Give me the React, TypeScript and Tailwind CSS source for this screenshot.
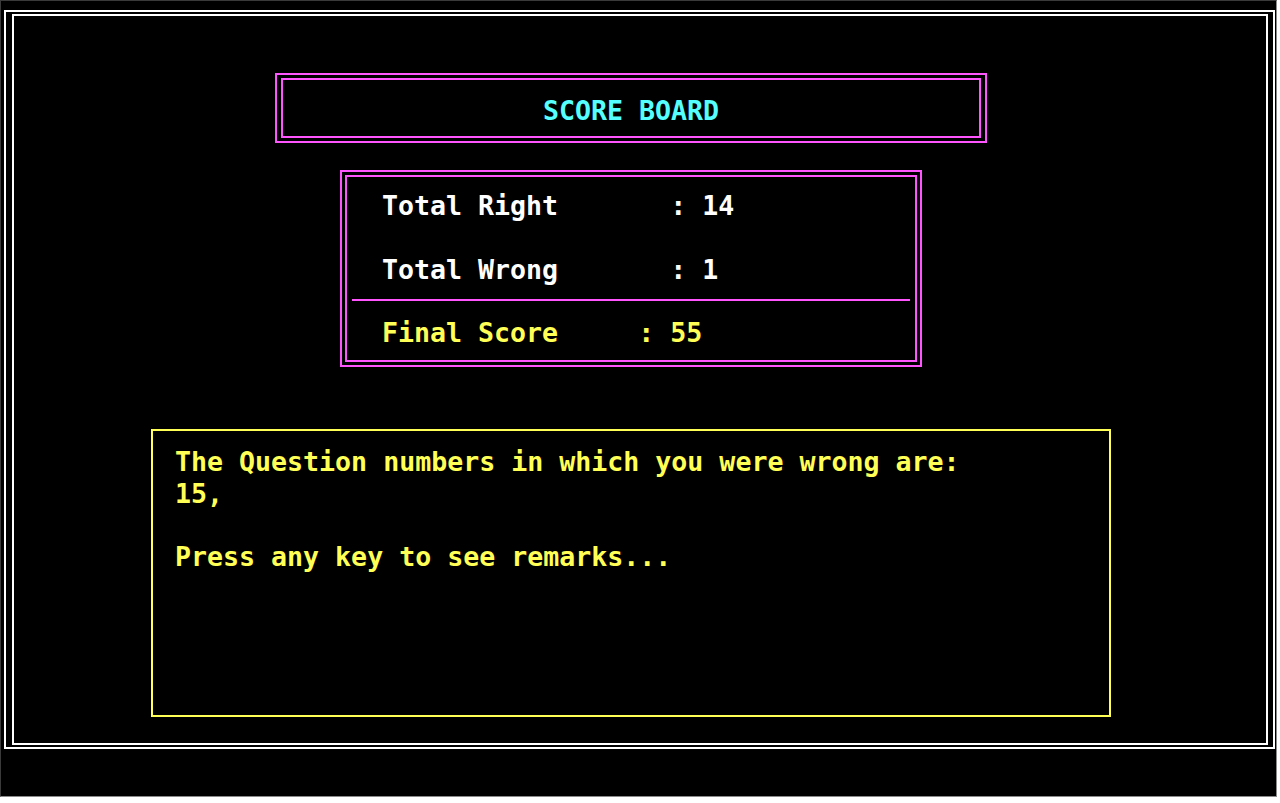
import React from "react";

const mono = "font-['DejaVu_Sans_Mono','Liberation_Mono',monospace] text-[26.6px] font-bold whitespace-pre";

export default function App() {
  return (
    <div className="w-[1280px] h-[803px] bg-white overflow-hidden">
      <div className="w-[1277px] h-[797px] bg-black border-r border-b border-[#8a8a8a] border-t border-l border-t-[#3a3a3a] border-l-[#3a3a3a] box-border pt-[9px] pl-[3px]">
        {/* outer white frame */}
        <div className="w-[1271px] h-[739px] border-2 border-white box-border pl-[6px] pr-[5px] pt-[2px] pb-[2px]">
          {/* inner white frame */}
          <div className="w-full h-full border-2 border-white box-border flex flex-col">
            {/* Title box */}
            <div className="ml-[261px] mt-[57px] w-[712px] h-[70px] border-2 border-[#ff55ff] box-border px-[4px] py-[3px]">
              <div className="w-full h-full border-2 border-[#ff55ff] box-border flex items-center justify-center">
                <span className={`${mono} text-[#55ffff] leading-[32px] pt-[5px]`}>SCORE BOARD</span>
              </div>
            </div>

            {/* Stats box */}
            <div className="ml-[326px] mt-[27px] w-[582px] h-[197px] border-2 border-[#ff55ff] box-border p-[3px]">
              <div className="w-full h-full border-2 border-[#ff55ff] box-border flex flex-col pt-[13px]">
                <div className={`${mono} text-white leading-[32px] pl-[35px]`}>Total Right       : 14</div>
                <div className={`${mono} text-white leading-[32px] pl-[35px] mt-[32px]`}>Total Wrong       : 1</div>
                <div className="mx-[5px] mt-[13px] h-[2px] bg-[#ff55ff]" />
                <div className={`${mono} text-[#ffff55] leading-[32px] pl-[35px] mt-[16px]`}>Final Score     : 55</div>
              </div>
            </div>

            {/* Wrong answers box */}
            <div className="ml-[137px] mt-[62px] w-[960px] h-[288px] border-2 border-[#ffff55] box-border pl-[22px] pt-[15px]">
              <div className={`${mono} text-[#ffff55] leading-[31.5px]`}>The Question numbers in which you were wrong are:</div>
              <div className={`${mono} text-[#ffff55] leading-[31.5px]`}>15,</div>
              <div className={`${mono} text-[#ffff55] leading-[31.5px]`}> </div>
              <div className={`${mono} text-[#ffff55] leading-[31.5px]`}>Press any key to see remarks...</div>
            </div>
          </div>
        </div>
      </div>
    </div>
  );
}
